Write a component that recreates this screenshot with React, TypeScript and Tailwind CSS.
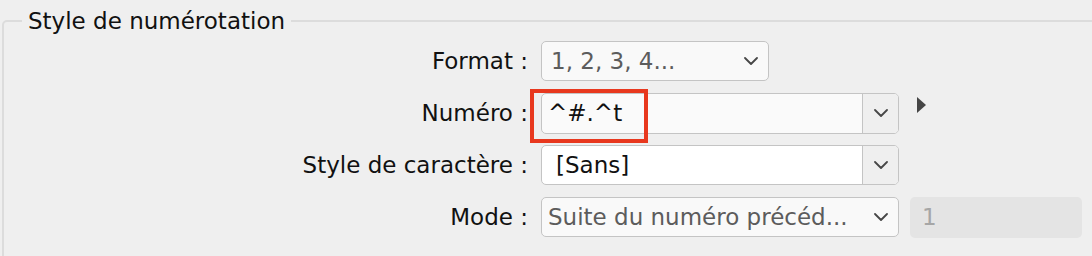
import React from "react";

const Chevron = ({ className = "" }: { className?: string }) => (
  <svg width="14" height="8" viewBox="0 0 14 8" className={className} fill="none">
    <path d="M1 1 L7 7 L13 1" stroke="#474747" strokeWidth="1.8" strokeLinecap="round" strokeLinejoin="round" />
  </svg>
);

const Label = ({ children }: { children: React.ReactNode }) => (
  <div className="w-[524px] shrink-0 text-right text-[#111] whitespace-nowrap">{children}</div>
);

export default function App() {
  return (
    <div
      className="w-[1092px] h-[256px] overflow-hidden bg-[#efefef] text-[23px] leading-[28px]"
      style={{ fontFamily: '"DejaVu Sans", "Liberation Sans", sans-serif' }}
    >
      <fieldset className="ml-[2px] mt-[7px] w-[1200px] h-[400px] border-2 border-[#dcdcdc] rounded-tl-[5px]">
        <legend className="ml-[18px] px-[6px] text-[#111]">Style de numérotation</legend>
        <div className="flex flex-col gap-[12px] pt-[6px]">
          {/* Format */}
          <div className="flex items-center h-[40px]">
            <Label>Format :</Label>
            <div className="ml-[13px] w-[228px] h-[40px] rounded-[5px] border-[1.5px] border-[#c4c4c4] bg-[#f9f9f9] flex items-center justify-between pl-[9px] pr-[10px]">
              <span className="text-[#5c5c5c]">1, 2, 3, 4...</span>
              <Chevron />
            </div>
          </div>
          {/* Numéro */}
          <div className="flex items-center h-[40px]">
            <Label>Numéro :</Label>
            <div className="relative ml-[13px] w-[358px] h-[41px] rounded-[5px] border-[1.5px] border-[#c4c4c4] bg-[#fafafa] flex">
              <div className="flex-1 flex items-center pl-[6px] text-[#111]">^#.^t</div>
              <div className="w-[36px] border-l-[1.5px] border-[#c4c4c4] bg-[#efefef] rounded-r-[4px] flex items-center justify-center">
                <Chevron />
              </div>
              <div className="absolute left-[-12px] top-[-5px] w-[118px] h-[54px] border-[4px] border-[#e8381e]" />
            </div>
            <svg width="10" height="16" viewBox="0 0 10 16" className="ml-[18px] self-start mt-[4px]">
              <path d="M0 0 L9 8 L0 16 Z" fill="#454545" />
            </svg>
          </div>
          {/* Style de caractère */}
          <div className="flex items-center h-[40px]">
            <Label>Style de caractère :</Label>
            <div className="ml-[13px] w-[358px] h-[40px] rounded-[5px] border-[1.5px] border-[#c4c4c4] bg-white flex">
              <div className="flex-1 flex items-center pl-[14px] text-[#111]">[Sans]</div>
              <div className="w-[36px] border-l-[1.5px] border-[#c4c4c4] bg-[#efefef] rounded-r-[4px] flex items-center justify-center">
                <Chevron />
              </div>
            </div>
          </div>
          {/* Mode */}
          <div className="flex items-center h-[40px]">
            <Label>Mode :</Label>
            <div className="ml-[13px] w-[358px] h-[40px] rounded-[5px] border-[1.5px] border-[#c4c4c4] bg-[#f9f9f9] flex items-center justify-between pl-[6px] pr-[10px]">
              <span className="text-[#5c5c5c] whitespace-nowrap">Suite du numéro précéd...</span>
              <Chevron />
            </div>
            <div className="ml-[11px] w-[172px] h-[41px] rounded-[5px] bg-[#e4e4e4] flex items-center pl-[12px] text-[#a6a6a6]">
              1
            </div>
          </div>
        </div>
      </fieldset>
    </div>
  );
}
